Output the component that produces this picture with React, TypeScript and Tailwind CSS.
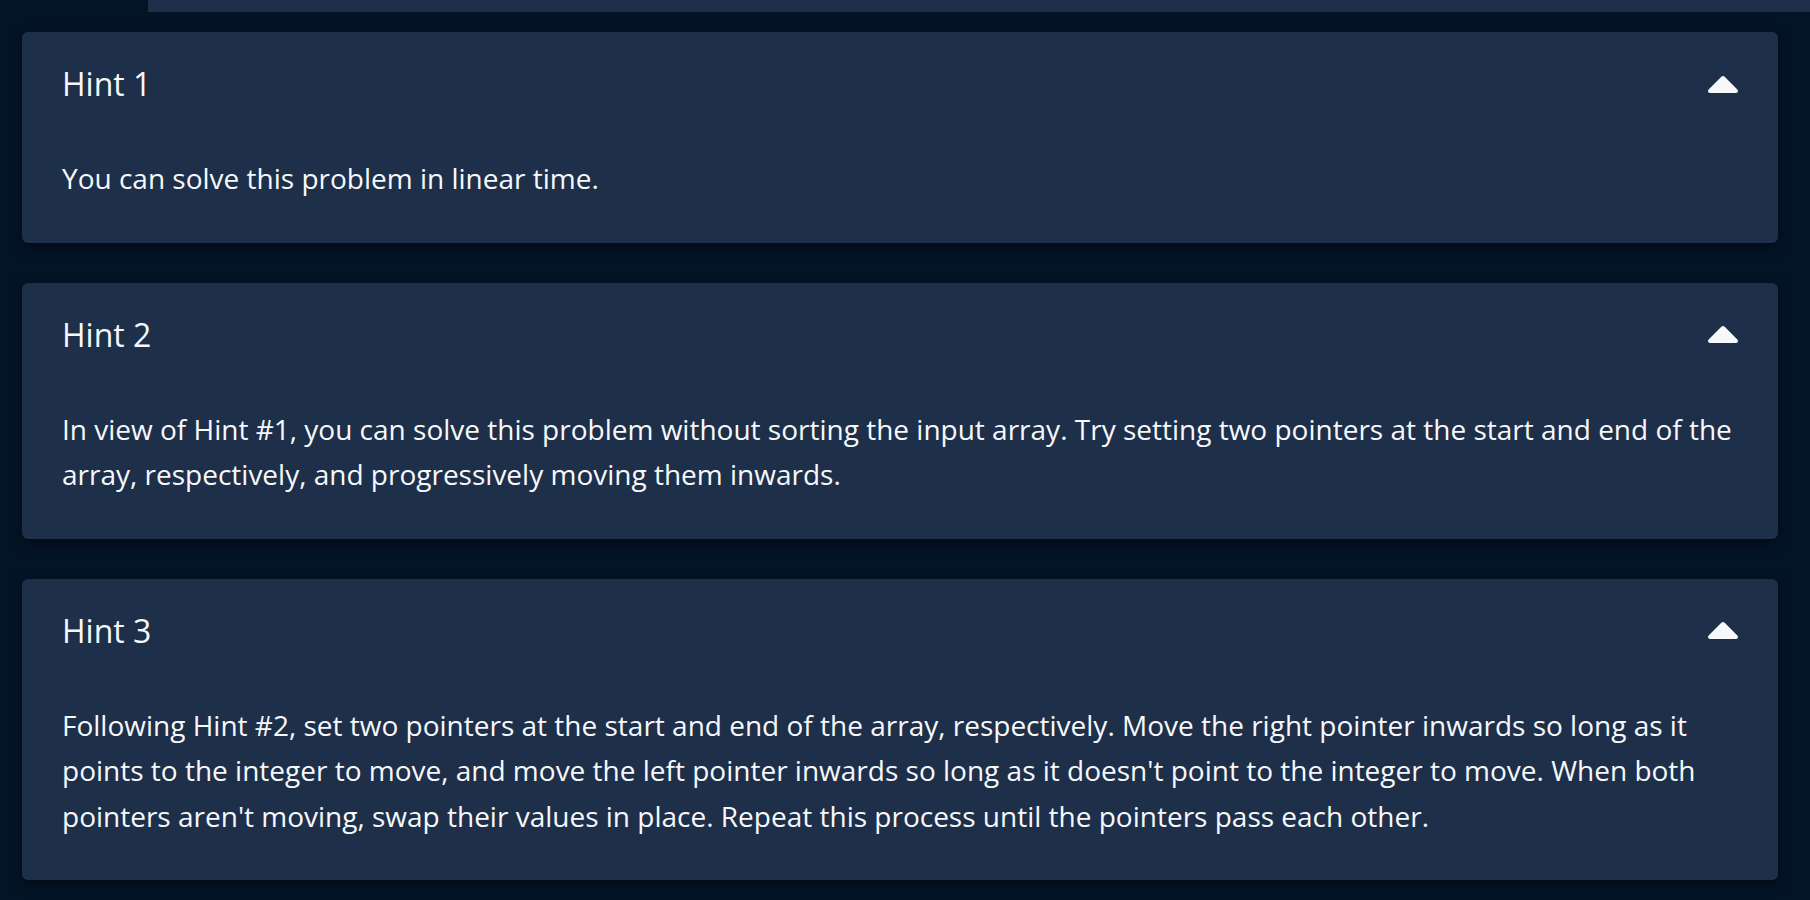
const hints = [
  {
    title: "Hint 1",
    body: "You can solve this problem in linear time.",
  },
  {
    title: "Hint 2",
    body: "In view of Hint #1, you can solve this problem without sorting the input array. Try setting two pointers at the start and end of the array, respectively, and progressively moving them inwards.",
  },
  {
    title: "Hint 3",
    body: "Following Hint #2, set two pointers at the start and end of the array, respectively. Move the right pointer inwards so long as it points to the integer to move, and move the left pointer inwards so long as it doesn't point to the integer to move. When both pointers aren't moving, swap their values in place. Repeat this process until the pointers pass each other.",
  },
];

function CaretUp() {
  return (
    <svg width="30" height="17" viewBox="13 183 294 169" fill="currentColor" aria-hidden>
      <path d="M288.662 352H31.338c-17.818 0-26.741-21.543-14.142-34.142l128.662-128.662c7.81-7.81 20.474-7.81 28.284 0l128.662 128.662c12.6 12.599 3.676 34.142-14.142 34.142z" />
    </svg>
  );
}

function HintCard({ title, body }: { title: string; body: string }) {
  return (
    <div className="rounded-md bg-[#1e2f4a] px-10 pt-[30px] pb-[41px] shadow-[0_4px_14px_rgba(0,0,0,0.55)]">
      <div className="flex items-center justify-between">
        <span className="text-[32px] leading-[44px] text-[#f7f8fa]">{title}</span>
        <span className="text-[#f7f8fa]">
          <CaretUp />
        </span>
      </div>
      <p className="mt-[50px] text-[28px] leading-[45.5px] text-[#f7f8fa]">{body}</p>
    </div>
  );
}

export default function App() {
  return (
    <div className="min-h-screen bg-[#041427] font-['Open_Sans',sans-serif]">
      <div className="flex h-3">
        <div className="w-[148px]" />
        <div className="flex-1 bg-[#1e2f4a]" />
      </div>
      <div className="flex flex-col gap-10 pt-5 pl-[22px] pr-8 pb-10">
        {hints.map((h) => (
          <HintCard key={h.title} title={h.title} body={h.body} />
        ))}
      </div>
    </div>
  );
}
